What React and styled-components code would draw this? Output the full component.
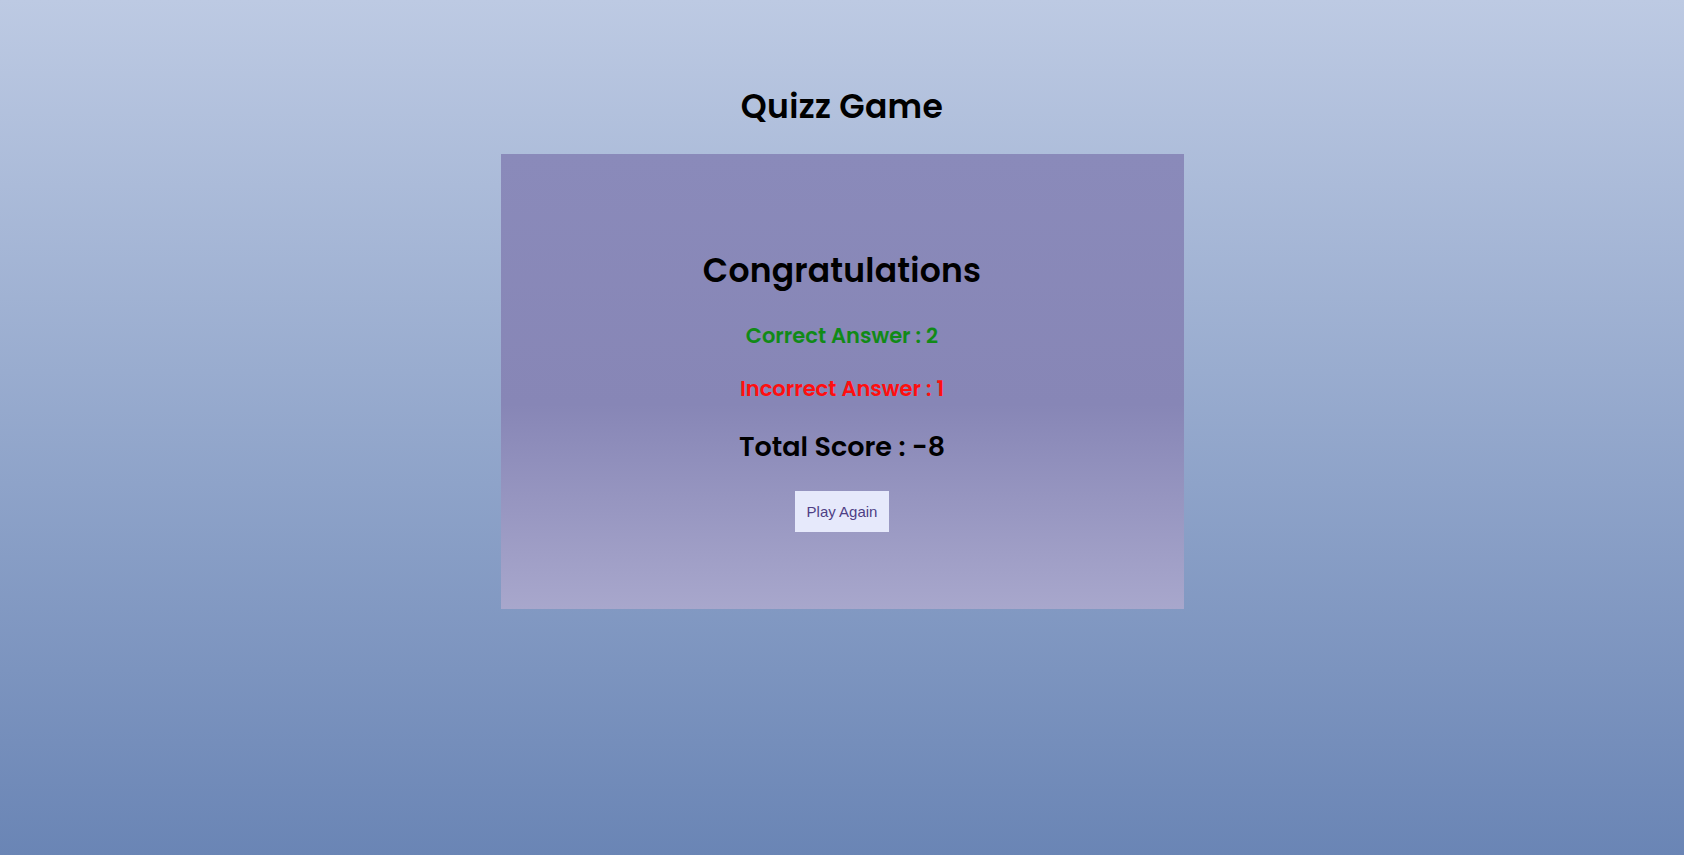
import React from 'react';
import styled, { createGlobalStyle } from 'styled-components';

const GlobalStyle = createGlobalStyle`
  html, body {
    margin: 0;
    padding: 0;
  }
  body {
    font-family: Poppins, "Open Sans", sans-serif;
  }
`;

const Page = styled.div`
  min-height: 100vh;
  box-sizing: border-box;
  background: linear-gradient(to bottom, #bdcae3 0%, #6a85b5 100%);
  display: flex;
  flex-direction: column;
  align-items: center;
  padding-top: 85px;
`;

const Title = styled.h1`
  font-family: Poppins, "Open Sans", sans-serif;
  font-size: 33px;
  font-weight: 600;
  color: #000;
  margin: 0;
  line-height: 44px;
  letter-spacing: 0.3px;
`;

const Card = styled.div`
  width: 683px;
  height: 455px;
  margin-top: 25px;
  box-sizing: border-box;
  background: linear-gradient(to bottom, #8a8aba 0%, #8786b6 55%, #a8a7cc 100%);
  display: flex;
  flex-direction: column;
  align-items: center;
  padding-top: 93px;
`;

const Heading = styled.h2`
  font-family: Poppins, "Open Sans", sans-serif;
  font-size: 33px;
  font-weight: 600;
  margin: 0;
  line-height: 48px;
  color: #000;
  letter-spacing: 0.2px;
`;

const Stat = styled.p`
  font-family: Poppins, "Open Sans", sans-serif;
  font-size: ${p => p.$size || 21}px;
  font-weight: ${p => p.$weight || 600};
  color: ${p => p.$color};
  margin: ${p => p.$mt}px 0 0;
  line-height: 1.3;
`;

const Button = styled.button`
  margin-top: 27px;
  width: 94px;
  height: 41px;
  border: none;
  background: #e6e9fb;
  color: #4e3f85;
  font-family: "Liberation Sans", Arial, sans-serif;
  font-size: 15px;
  cursor: pointer;
`;

export default function App() {
  return (
    <Page>
      <GlobalStyle />
      <Title>Quizz Game</Title>
      <Card>
        <Heading>Congratulations</Heading>
        <Stat $color="#118a17" $mt={27}>Correct Answer : 2</Stat>
        <Stat $color="#ff0f0f" $mt={26}>Incorrect Answer : 1</Stat>
        <Stat $color="#000" $size={27} $mt={26}>Total Score : -8</Stat>
        <Button>Play Again</Button>
      </Card>
    </Page>
  );
}
